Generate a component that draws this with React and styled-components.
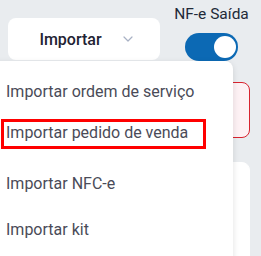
import React from "react";
import styled, { createGlobalStyle } from "styled-components";

const Global = createGlobalStyle`
  html, body { margin: 0; padding: 0; }
  body {
    background: #e9ecef;
    font-family: Roboto, "Liberation Sans", Arial, sans-serif;
    overflow: hidden;
  }
`;

const Page = styled.div`
  position: relative;
  width: 261px;
  height: 256px;
  overflow: hidden;
  background: #e9ecef;
`;

const Header = styled.div`
  display: flex;
  justify-content: space-between;
  align-items: flex-start;
  padding: 4px 11px 0 8px;
`;

const SelectButton = styled.button`
  margin-top: 14px;
  width: 152px;
  height: 42px;
  display: flex;
  align-items: center;
  justify-content: center;
  gap: 21px;
  background: #ffffff;
  border: none;
  border-radius: 8px;
  font-family: Roboto, "Liberation Sans", Arial, sans-serif;
  font-size: 16px;
  font-weight: 500;
  color: #1f2333;
  padding: 0 0 0 4px;
`;

const ToggleGroup = styled.div`
  display: flex;
  flex-direction: column;
  align-items: center;
  width: 77px;
`;

const ToggleLabel = styled.span`
  font-size: 15.5px;
  line-height: 20px;
  color: #222a38;
  white-space: nowrap;
`;

const Switch = styled.div`
  margin-top: 9px;
  width: 53px;
  height: 28px;
  border-radius: 14px;
  background: #0c69b4;
  display: flex;
  align-items: center;
  justify-content: ${(p) => (p.$on ? "flex-end" : "flex-start")};
  padding: 0 2px;
  box-sizing: border-box;
`;

const Knob = styled.span`
  width: 22px;
  height: 22px;
  border-radius: 50%;
  background: #ffffff;
`;

const Content = styled.div`
  display: flex;
  flex-direction: column;
  gap: 24px;
  padding: 21px 11px 0 8px;
`;

const Card = styled.div`
  height: ${(p) => p.$h}px;
  border-radius: 8px;
  background: ${(p) => (p.$alert ? "#fdf1f4" : "#ffffff")};
  border: 1px solid ${(p) => (p.$alert ? "#d8232f" : "#ffffff")};
  box-sizing: border-box;
`;

const Menu = styled.ul`
  position: absolute;
  left: -10px;
  top: 61px;
  width: 243px;
  height: 205px;
  margin: 0;
  padding: 7px 0 0 10px;
  box-sizing: border-box;
  list-style: none;
  background: #ffffff;
  border-radius: 0 8px 8px 8px;
  box-shadow: 0 2px 6px rgba(0, 0, 0, 0.12);
`;

const Item = styled.li`
  height: 46px;
  display: flex;
  align-items: center;
  padding-left: ${(p) => (p.$marked ? 1 : 6)}px;
  font-size: 16px;
  color: #4a4b58;
  white-space: nowrap;
`;

const Marked = styled.span`
  display: inline-block;
  border: 3px solid #ff0000;
  padding: 1px 0 3px 2px;
  width: 197px;
  line-height: 20px;
  margin-top: -6px;
`;

const Chevron = () => (
  <svg width="10" height="6" viewBox="0 0 10 6" fill="none">
    <path d="M1 1l4 4 4-4" stroke="#a8b1c4" strokeWidth="1.2" strokeLinecap="round" strokeLinejoin="round" />
  </svg>
);

const items = [
  "Importar ordem de serviço",
  "Importar pedido de venda",
  "Importar NFC-e",
  "Importar kit",
];

export default function App() {
  return (
    <Page>
      <Global />
      <Header>
        <SelectButton>
          Importar
          <Chevron />
        </SelectButton>
        <ToggleGroup>
          <ToggleLabel>NF-e Saída</ToggleLabel>
          <Switch $on>
            <Knob />
          </Switch>
        </ToggleGroup>
      </Header>
      <Content>
        <Card $alert $h={56} />
        <Card $h={120} />
      </Content>
      <Menu>
        {items.map((t, i) =>
          i === 1 ? (
            <Item key={t} $marked>
              <Marked>{t}</Marked>
            </Item>
          ) : (
            <Item key={t}>{t}</Item>
          )
        )}
      </Menu>
    </Page>
  );
}
